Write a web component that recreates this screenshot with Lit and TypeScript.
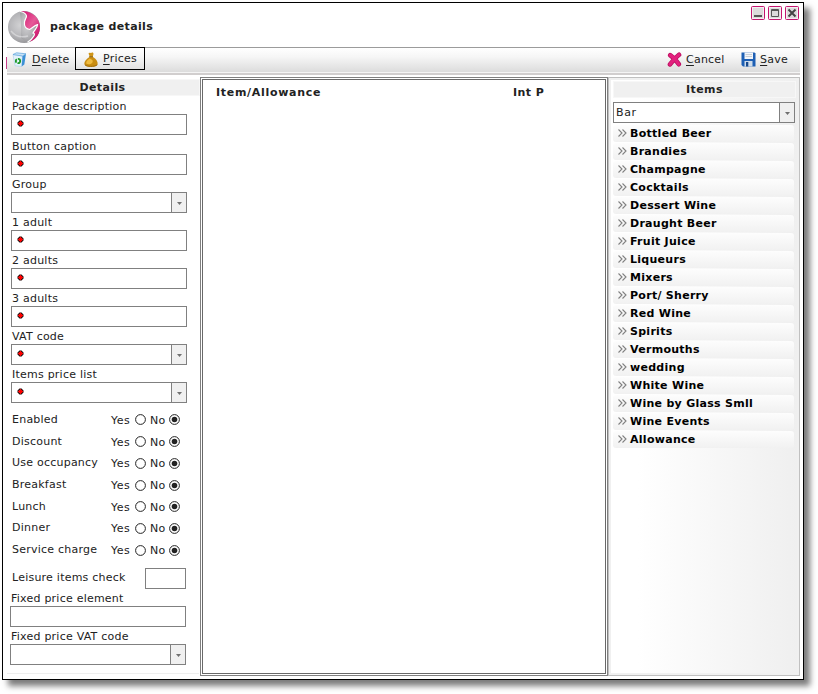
import { LitElement, html, css, svg, nothing } from "lit";
import { customElement } from "lit/decorators.js";

type Field = { label: string; req?: boolean; select?: boolean };

const FIELDS: Field[] = [
  { label: "Package description", req: true },
  { label: "Button caption", req: true },
  { label: "Group", select: true },
  { label: "1 adult", req: true },
  { label: "2 adults", req: true },
  { label: "3 adults", req: true },
  { label: "VAT code", req: true, select: true },
  { label: "Items price list", req: true, select: true },
];
const OPTIONS = ["Enabled", "Discount", "Use occupancy", "Breakfast", "Lunch", "Dinner", "Service charge"];
const ITEMS = [
  "Bottled Beer", "Brandies", "Champagne", "Cocktails", "Dessert Wine", "Draught Beer",
  "Fruit Juice", "Liqueurs", "Mixers", "Port/ Sherry", "Red Wine", "Spirits", "Vermouths",
  "wedding", "White Wine", "Wine by Glass Smll", "Wine Events", "Allowance",
];

const icon = (w: number, h: number, body: unknown) =>
  html`<svg width=${w} height=${h} viewBox="0 0 ${w} ${h}">${body}</svg>`;

const LOGO = svg`
  <defs>
    <radialGradient id="silver" cx="38%" cy="45%" r="62%">
      <stop offset="0" stop-color="#d2d2d4"/><stop offset=".6" stop-color="#b4b4b7"/><stop offset="1" stop-color="#8f8f92"/>
    </radialGradient>
    <linearGradient id="pink" x1="0" y1="0" x2="1" y2="1">
      <stop offset="0" stop-color="#d2086c"/><stop offset=".5" stop-color="#e65a98"/><stop offset="1" stop-color="#c4005f"/>
    </linearGradient>
  </defs>
  <circle cx="17" cy="17" r="16" fill="url(#silver)"/>
  <path d="M13 1.500C23 -.6 33 7 33 17c0 7-4 12-9.500 14.500L17 20L18 11.500c.5-2.500 2-4 1.500-6C18.500 3.500 16 2 13 1.500Z" fill="url(#pink)"/>
  <path d="M13 1.500c3 .5 6 2 6.500 4.500c0 2-1.700 3.500-2 6C17 16 19 19 22.500 19.500c2.500-1 4.500-4 8-4.800c-.3 4-3 5-4.500 8.300c4-.5 1 6-5.500 9.300L14 28V12Z" fill="url(#silver)"/>
  <path d="M13 1.500c3 .5 6 2 6.500 4.500c0 2-1.700 3.500-2 6C17 16 19 19 22.500 19.500c2.500-1 4.500-4 8-4.800c-.3 4-3 5-4.500 8.300c3 0 1 5-5.500 9.300" fill="none" stroke="#fff" stroke-width="1.200"/>
  <path d="M4 21c4 5 10 7 17 5" fill="none" stroke="#e6e6e8" stroke-width="1.500" opacity=".6"/>`;

const BIN = svg`
  <path d="M1 2.500l9.500 1.500-.8 10.500L3 13.800Z" fill="#e3f1fb" stroke="#a9cdea" stroke-width=".6"/>
  <path d="M10.500 4 14 1.800 12.300 12.500 9.700 14.500Z" fill="#3b8fd6"/>
  <path d="M1 2.500 4.500.8 14 1.800 10.500 4Z" fill="#c9e2f6" stroke="#5ba4dd" stroke-width=".7"/>
  <circle cx="6" cy="9" r="2.200" fill="none" stroke="#1d9a28" stroke-width="1.800" stroke-dasharray="3.600 1"/>`;

const BAG = svg`
  <path d="M4.500 1.500C5.500 0 6.500 1.500 7.500 .7c1-.6 2.200 0 2 1.300L8.800 4.500H5.700Z" fill="#cf9518"/>
  <path d="M5.500 5h3.500C12 7 14 9.500 13.600 12c-.4 2.200-3 2.800-6.600 2.800S.8 14.200.4 12C0 9.500 2.500 7 5.500 5Z" fill="#c98d12"/>
  <path d="M5.500 6.500C3.500 8 2 9.500 2.200 11.500c1.500 1.200 4.500 1 5.800-.5s1-3.500-2.500-4.500Z" fill="#efbb3f"/>
  <path d="M5.200 4.700h3.800" stroke="#8c6110" stroke-width="1"/>
  <path d="M1 12.800c2 2 9 2.300 12.300 0" fill="none" stroke="#a06d0c" stroke-width="1"/>`;

const CROSS = svg`
  <path d="M3.200 3.200C6 5 9.500 9 11.800 12.200M12 2.800C8.500 5.500 5.500 9 3 12.300" fill="none" stroke="#b80c5c" stroke-width="4.600" stroke-linecap="round"/>
  <path d="M3.200 3.200C6 5 9.500 9 11.800 12.200M12 2.800C8.500 5.500 5.500 9 3 12.300" fill="none" stroke="#e2207e" stroke-width="3.200" stroke-linecap="round"/>`;

const DISK = svg`
  <path d="M.5 .5h13l1 1v13H2L.5 13Z" fill="#1d5fb4"/>
  <path d="M3.500 .5h8.500v6.500H3.500Z" fill="#f2f5f9"/>
  <path d="M4.500 2.500h6.500M4.500 4.500h6.500" stroke="#b9c2cc" stroke-width=".8"/>
  <path d="M3.500 9h8v5.500h-8Z" fill="#cfdcea"/>
  <path d="M5 10h2.300v4.500H5Z" fill="#17498c"/>`;

@customElement("app-root")
export class AppRoot extends LitElement {
  static styles = css`
    :host { display: block; width: 818px; height: 694px; overflow: hidden; background: #fff;
      font: 11px/14px "DejaVu Sans", sans-serif; letter-spacing: .23px; color: #222; }
    * { box-sizing: border-box; }
    svg { display: block; flex: none; }
    .win { width: 802px; height: 678px; margin: 2px 0 0 2px; border: 1px solid #000; background: #fff;
      box-shadow: 6px 6px 6px 0 #7c7c7c; display: flex; flex-direction: column; }
    .title { height: 44px; display: flex; padding: 0 4px 0 4px; }
    .title .logo { margin-top: 7px; }
    .title b { margin: 17px auto 0 9px; letter-spacing: .35px; }
    .ctl { display: flex; gap: 3px; margin-top: 3px; }
    .bar { position: relative; height: 28px; margin: 0 3px 1px 4px; border-top: 1px solid #9b9b9b; display: flex;
      align-items: flex-start; border-bottom: 2px solid #d1cece;
      background: linear-gradient(#fff 0, #f6f6f6 35%, #dcdcdc 24px, #f4f4f4 24px); }
    .sliver { position: absolute; left: -1px; top: 9px; width: 1px; height: 12px; background: #c8408a; }
    .btn { display: flex; align-items: center; height: 23px; gap: 4px; white-space: nowrap; }
    .del { width: 68px; padding-left: 5px; gap: 5px; }
    .prices { width: 70px; padding: 1px 0 0 8px; gap: 5px; border: 1px solid #000; margin-top: -1px; }
    .cancel { width: 74px; margin-left: auto; }
    .save { width: 59px; }
    u { text-underline-offset: 2px; text-decoration-thickness: 1px; }
    .main { display: flex; height: 603px; }
    .left { width: 197px; padding: 3px 0 0 5px; display: flex; flex-direction: column; }
    .head { height: 17px; flex: none; background: #f0f0f0; border: 1px solid #f7f7f7; text-align: center;
      font-weight: bold; line-height: 15px; letter-spacing: .4px; }
    .left .head { padding-right: 3px; }
    .field { height: 38px; display: flex; flex-direction: column; justify-content: flex-end; margin-left: 3px; }
    .field.first { height: 41px; padding-bottom: 2px; }
    .lbl { padding: 1px 0 0 1px; line-height: 17px; height: 17px; }
    .inp { width: 176px; height: 21px; flex: none; border: 1px solid #808080; background: #fff; display: flex;
      justify-content: space-between; }
    .dot { margin: 5px 0 0 5px; }
    .arrow { width: 15px; margin-left: auto; border-left: 1px solid #808080; background: #f0f0f0; padding: 9px 0 0 5px; }
    .opts { height: 152px; margin: 6px 0 0 4px; display: flex; flex-direction: column; }
    .opt { flex: 1; display: flex; align-items: center; }
    .opt .name { width: 99px; }
    .opt .yes, .opt .no { margin-top: 2px; width: 24px; }
    .opt .yes { letter-spacing: .5px; }
    .opt .no { width: 19px; }
    .radio { width: 15px; }
    .leis { display: flex; justify-content: space-between; width: 175px; margin: 7px 0 0 3px; padding-left: 1px; }
    .leis .inp { width: 41px; }
    .leis .t { margin-top: 3px; }
    .fix { margin-left: 2px; height: 38px; }
    .foot { margin-top: 8px; margin-left: -1px; height: 1px; background: #eee; width: 192px; }
    .mid { width: 408px; height: 599px; margin-top: 1px; border: 1px solid #808080; padding: 1px; }
    .mid .in { border: 1px solid #696969; height: 595px; display: flex; padding: 6px 0 0 13px; font-weight: bold; }
    .mid .c1 { width: 297px; letter-spacing: .7px; }
    .mid .c2 { letter-spacing: .45px; }
    .right { width: 192px; height: 599px; margin-top: 1px; border: 1px solid #c0c0c0;
      background: linear-gradient(90deg, #fff 15%, #efefef 100%); box-shadow: inset 0 0 0 2px #f0f0f0;
      padding: 3px 3px 0 4px; }
    .right .inp { width: 182px; margin-top: 4px; }
    .right .inp .v { padding: 3px 0 0 2px; line-height: 13px; letter-spacing: .6px; }
    .items { margin-top: 2px; letter-spacing: .28px; }
    .item { height: 17px; margin-bottom: 1px; border-radius: 3px; background: linear-gradient(#fdfdfd, #f1f1f1);
      display: flex; align-items: center; font-weight: bold; color: #000; padding-left: 5px; gap: 3px; width: 181px; }
    .item svg { margin-top: -1px; }
  `;

  input(f: { req?: boolean; select?: boolean }) {
    return html`<div class="inp">
      ${f.req ? html`<span class="dot">${icon(7, 7, svg`<path d="M2 0h3v1h1v1h1v3h-1v1h-1v1h-3v-1h-1v-1h-1v-3h1v-1h1Z" fill="#200" transform="translate(.5 .5) scale(.86)"/><path d="M3 1h1v1h1v1h1v1h-1v1h-1v1h-1v-1h-1v-1h-1v-1h1v-1h1Z" fill="#f00"/>`)}</span>` : nothing}
      ${f.select ? this.arrow() : nothing}
    </div>`;
  }
  arrow() {
    return html`<span class="arrow">${icon(5, 3, svg`<path d="M0 0h5L2.500 3Z" fill="#707070"/>`)}</span>`;
  }
  radio(on: boolean) {
    return html`<span class="radio">${icon(11, 11, svg`<circle cx="5.500" cy="5.500" r="4.900" fill="#fff" stroke="#222"/>${on ? svg`<circle cx="5.500" cy="5.500" r="2.800" fill="#222"/>` : nothing}`)}</span>`;
  }
  ctl(kind: number) {
    return icon(14, 14, svg`<rect x=".5" y=".5" width="13" height="13" rx="1" fill="#dcdadb" stroke="#c4146f"/>
      <rect x="1.500" y="1.500" width="11" height="11" fill="none" stroke="#f3f0f1"/>
      ${kind === 0 ? svg`<path d="M3 10h8" stroke="#555" stroke-width="2"/>` : kind === 1
        ? svg`<path d="M3.500 3.500h7v7h-7zM3 4.500h8" fill="none" stroke="#555"/>`
        : svg`<path d="M3.500 3.500l7 7m0-7l-7 7" stroke="#444" stroke-width="2"/>`}`);
  }

  render() {
    return html`<div class="win">
      <div class="title">
        <span class="logo">${icon(34, 34, LOGO)}</span>
        <b>package details</b>
        <span class="ctl">${[0, 1, 2].map((k) => this.ctl(k))}</span>
      </div>
      <div class="bar">
        <i class="sliver"></i>
        <span class="btn del">${icon(15, 15, BIN)}<span><u>D</u>elete</span></span>
        <span class="btn prices">${icon(14, 15, BAG)}<span><u>P</u>rices</span></span>
        <span class="btn cancel">${icon(15, 15, CROSS)}<span><u>C</u>ancel</span></span>
        <span class="btn save">${icon(15, 15, DISK)}<span><u>S</u>ave</span></span>
      </div>
      <div class="main">
        <div class="left">
          <div class="head">Details</div>
          ${FIELDS.map((f, i) => html`<div class="field ${i ? "" : "first"}"><span class="lbl">${f.label}</span>${this.input(f)}</div>`)}
          <div class="opts">${OPTIONS.map((o) => html`<div class="opt"><span class="name">${o}</span><span class="yes">Yes</span>${this.radio(false)}<span class="no">No</span>${this.radio(true)}</div>`)}</div>
          <div class="leis"><span class="t">Leisure items check</span>${this.input({})}</div>
          <div class="fix"><div class="lbl">Fixed price element</div>${this.input({})}</div>
          <div class="fix"><div class="lbl">Fixed price VAT code</div>${this.input({ select: true })}</div>
          <div class="foot"></div>
        </div>
        <div class="mid"><div class="in"><span class="c1">Item/Allowance</span><span class="c2">Int P</span></div></div>
        <div class="right">
          <div class="head">Items</div>
          <div class="inp"><span class="v">Bar</span>${this.arrow()}</div>
          <div class="items">${ITEMS.map((t) => html`<div class="item">${icon(9, 8, svg`<path d="M.5 .5L4 4 .5 7.500M4.500 .5L8 4 4.500 7.500" fill="none" stroke="#808080" stroke-width="1.100"/>`)}<span>${t}</span></div>`)}</div>
        </div>
      </div>
    </div>`;
  }
}
